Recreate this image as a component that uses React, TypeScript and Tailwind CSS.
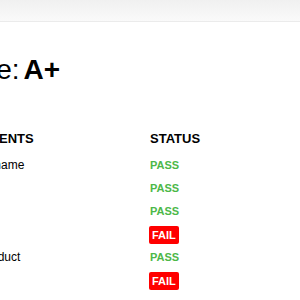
import React from "react";

const rows: { label: string; pass: boolean }[] = [
  { label: "Rename", pass: true },
  { label: "H1", pass: true },
  { label: "Alt", pass: true },
  { label: "Bio", pass: false },
  { label: "Product", pass: true },
  { label: "Tel", pass: false },
];

export default function App() {
  return (
    <div
      className="w-[300px] h-[300px] overflow-hidden bg-white text-black"
      style={{ fontFamily: '"Liberation Sans", Arial, sans-serif' }}
    >
      <div className="h-[22px] bg-gradient-to-b from-[#f0f0f0] to-[#fafafa] border-b border-[#ebebeb]" />
      <div className="ml-[-66px] pt-[32px]">
        <h1 className="text-[28px] leading-[32px] whitespace-nowrap">
          Grade:<span className="ml-[4px] font-bold">A+</span>
        </h1>
        <div className="mt-[37px] ml-[-5px] grid grid-cols-[221px_100px] whitespace-nowrap">
          <div className="h-[31px] text-[13px] font-bold leading-[31px]">REQUIREMENTS</div>
          <div className="h-[31px] text-[13px] font-bold leading-[31px]">STATUS</div>
          {rows.map((r) => (
            <React.Fragment key={r.label}>
              <div className="h-[23px] text-[12px] leading-[23px] flex items-center">
                <span className="ml-[50px]">{r.label}</span>
              </div>
              <div className="h-[23px] flex items-center">
                {r.pass ? (
                  <span className="text-[11px] font-bold text-[#4cb848]">PASS</span>
                ) : (
                  <span className="ml-[-1px] rounded-[2px] bg-[#ff0000] px-[3px] py-[2px] text-[11px] font-bold leading-[14px] text-white">
                    FAIL
                  </span>
                )}
              </div>
            </React.Fragment>
          ))}
        </div>
      </div>
    </div>
  );
}
